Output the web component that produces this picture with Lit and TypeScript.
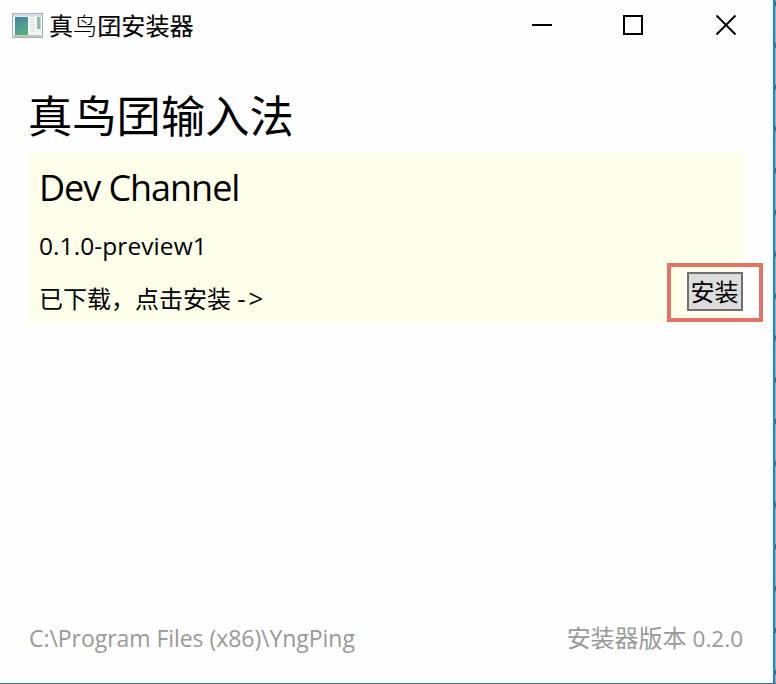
import { LitElement, html, css } from "lit";
import { customElement } from "lit/decorators.js";

@customElement("app-root")
export class AppRoot extends LitElement {
  static styles = css`
    :host {
      display: flex;
      flex-direction: column;
      box-sizing: border-box;
      width: 776px;
      height: 684px;
      overflow: hidden;
      position: relative;
      background: #fefefe;
      border-bottom: 1px solid #35779c;
      color: #000;
      font-family: "Open Sans", "Noto Sans CJK SC", sans-serif;
      font-size: 24px;
      white-space: nowrap;
    }
    .edge { position: absolute; right: 0; top: 0; }
    .bar { display: flex; align-items: center; height: 51px; padding-left: 11px; }
    .title { margin-left: 5px; font-size: 24.1px; line-height: 50px; flex: 1; -webkit-text-stroke: 0.15px #000; }
    .thin { font-weight: 300; -webkit-text-stroke: 0; }
    .controls { display: block; width: 254px; height: 51px; }
    .main { flex: 1; display: flex; flex-direction: column; padding: 35px 33px 0 28px; }
    h1 { margin: 0; font-size: 44.3px; font-weight: 400; line-height: 60px; height: 66px; }
    .panel { height: 171px; box-sizing: border-box; margin-left: 1px; padding: 9px 0 0 10px; background: #feffeb; display: flex; flex-direction: column; }
    h2 { margin: 0; font-weight: 400; font-size: 36px; line-height: 54px; letter-spacing: -1.05px; }
    .version { font-size: 24.5px; line-height: 38px; margin-top: 12px; letter-spacing: 0.08px; }
    .action { display: flex; justify-content: space-between; margin-top: 7px; }
    .status { line-height: 53px; }
    .arrow { font-size: 26px; letter-spacing: 3px; line-height: 1; }
    .install {
      box-sizing: border-box;
      width: 56px;
      height: 39px;
      padding: 0 1px 0 0;
      border: 2px solid #707070;
      background: #ddd;
      color: #000;
      font: inherit;
      line-height: 36px;
    }
    .frame {
      box-sizing: border-box;
      width: 96px;
      height: 59px;
      border: 4px solid #e17464;
      position: absolute;
      left: 667px;
      top: 263px;
    }
    footer { display: flex; justify-content: space-between; margin: auto 0 0 1px; height: 67px; line-height: 44px; color: #999; font-size: 23px; letter-spacing: -0.05px; }
    .build { font-size: 24px; }
    .number { font-size: 22.5px; letter-spacing: 0; }
  `;

  render() {
    return html`
      <div class="bar">
        <svg width="33" height="28" viewBox="0 0 33 28">
          <defs>
            <linearGradient id="screen" x1="0" y1="0" x2="0.5" y2="1">
              <stop offset="0" stop-color="#4682a5" />
              <stop offset="1" stop-color="#55ad80" />
            </linearGradient>
          </defs>
          <rect x="1.5" y="1.5" width="30" height="24" fill="#f4f6f6" stroke="#a9adb0" />
          <path d="M2 3.5H31" stroke="#c9dce6" stroke-width="2" />
          <rect x="4" y="5" width="13" height="18" fill="url(#screen)" />
          <path d="M19 7h5M19 10h4M19 13h5M19 16h4M19 19h5" stroke="#d2d8dc" />
          <rect x="26" y="5" width="3.5" height="12" fill="#91b8aa" />
          <path d="M3 24H30" stroke="#bcc7c6" stroke-width="2" />
        </svg>
        <div class="title">真<span class="thin">鸟</span>囝安装器</div>
        <svg class="controls" viewBox="0 0 254 51" fill="none" stroke="#000" stroke-width="2">
          <path d="M10 25H30" />
          <rect x="102" y="16" width="18" height="18" />
          <path d="M194.500 15.500L213.500 34.500M213.500 15.500L194.500 34.500" />
        </svg>
      </div>
      <div class="main">
        <h1>真鸟囝输入法</h1>
        <section class="panel">
          <h2>Dev Channel</h2>
          <div class="version">0.1.0-preview1</div>
          <div class="action">
            <span class="status">已下载，点击安装 <span class="arrow">-&gt;</span></span>
            <button class="install">安装</button>
          </div>
        </section>
        <footer>
          <span>C:\\Program Files (x86)\\YngPing</span>
          <span class="build">安装器版本 <span class="number">0.2.0</span></span>
        </footer>
      </div>
      <div class="frame"></div>
      <svg class="edge" width="6" height="684">
        <defs>
          <pattern id="ticks" width="6" height="41.8" patternUnits="userSpaceOnUse">
            <rect width="6" height="41.8" fill="#7fb9e2" />
            <rect y="1" width="6" height="5" fill="#2b6da6" />
          </pattern>
        </defs>
        <rect width="3" height="684" fill="#f3fcff" />
        <rect x="3" width="2" height="684" fill="#3a7dac" />
        <rect x="5" width="1" height="684" fill="url(#ticks)" />
      </svg>
    `;
  }
}
